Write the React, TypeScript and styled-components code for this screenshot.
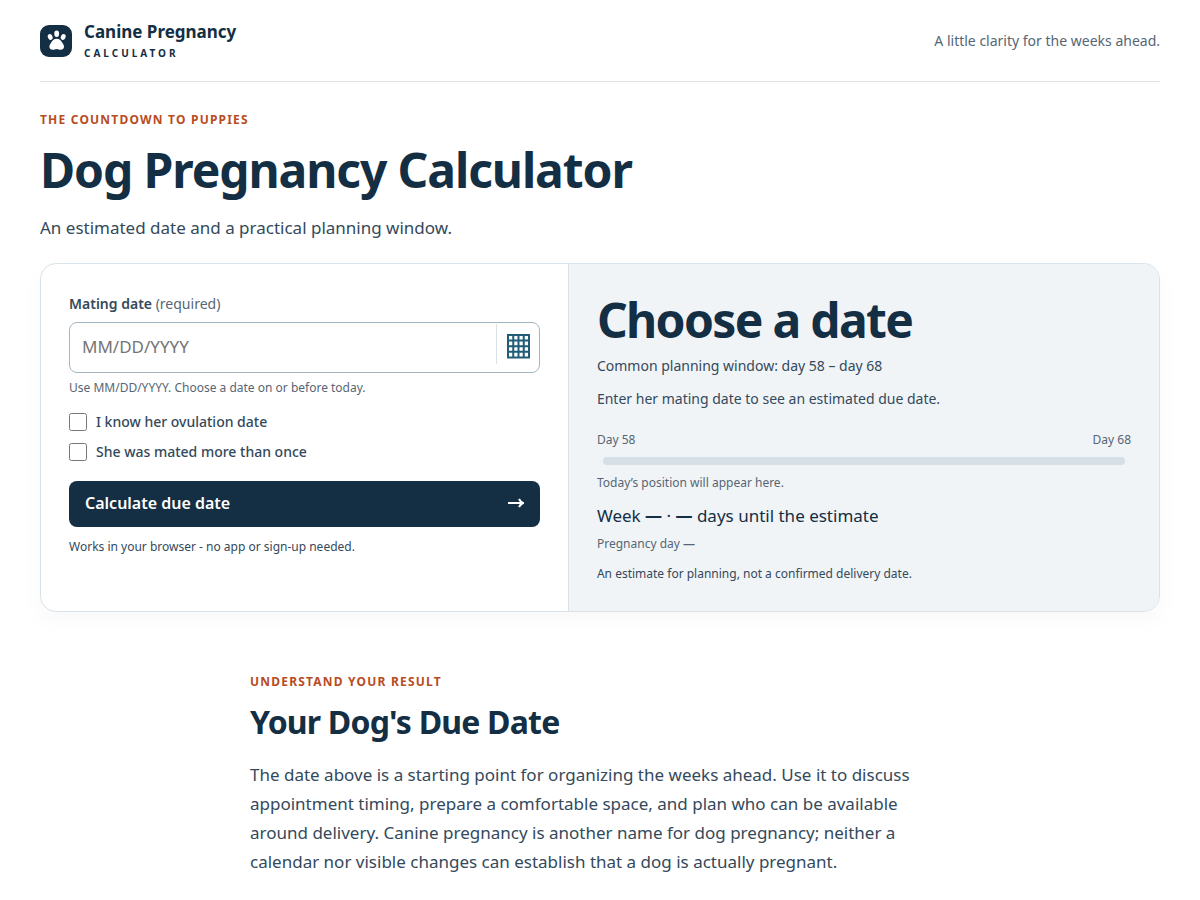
import React from "react";
import styled, { createGlobalStyle } from "styled-components";

const navy = "#142e43";
const slate = "#34495b";
const muted = "#566675";
const line = "#d9e2e8";

const GlobalStyle = createGlobalStyle`
  *, *::before, *::after { box-sizing: border-box; }
  body {
    margin: 0;
    background: #fff;
    color: ${slate};
    font-family: "Noto Sans", sans-serif;
    font-size: 17px;
  }
  h1, h2, p { margin: 0; }
  button, input { font: inherit; }
`;

const Page = styled.div`
  max-width: 1200px;
  margin: 0 auto;
  padding: 0 40px;
`;

const Header = styled.header`
  display: flex;
  align-items: center;
  justify-content: space-between;
  min-height: 82px;
  border-bottom: 1px solid #dde3e7;
`;

const Brand = styled.a`
  display: flex;
  align-items: center;
  gap: 12px;
  color: ${navy};
  text-decoration: none;
`;

const BrandMark = styled.svg`
  width: 32px;
  height: 32px;
`;

const BrandText = styled.span`
  display: flex;
  flex-direction: column;
  padding-top: 2px;
`;

const BrandName = styled.span`
  font-size: 17px;
  font-weight: 700;
  line-height: 22px;
`;

const BrandSub = styled.span`
  font-size: 10px;
  font-weight: 700;
  line-height: 20px;
  letter-spacing: 3px;
`;

const Tagline = styled.p`
  color: ${muted};
  font-size: 14px;
  line-height: 22px;
`;

const Intro = styled.section`
  padding: 29px 0 21px;
`;

const Eyebrow = styled.p`
  color: #b84c1f;
  font-size: 12px;
  font-weight: 700;
  line-height: 18px;
  letter-spacing: 0.1em;
  text-transform: uppercase;
`;

const Title = styled.h1`
  margin: 13px 0 16px;
  color: ${navy};
  font-size: 48px;
  font-weight: 700;
  line-height: 56px;
  letter-spacing: -0.023em;
`;

const Lead = styled.p`
  line-height: 28px;
`;

const Card = styled.section`
  display: grid;
  grid-template-columns: 17fr 19fr;
  overflow: hidden;
  border: 1px solid ${line};
  border-radius: 16px;
  box-shadow: 0 8px 24px rgba(20, 45, 66, 0.03);
`;

const DateForm = styled.form`
  padding: 28px;
  border-right: 1px solid ${line};
`;

const FieldLabel = styled.label`
  display: block;
  margin-bottom: 6px;
  font-size: 14px;
  font-weight: 600;
  line-height: 24px;
`;

const Optional = styled.span`
  color: ${muted};
  font-weight: 400;
`;

const DateField = styled.div`
  display: flex;
  height: 51px;
  border: 1px solid #a3b7c2;
  border-radius: 8px;
  background: #fff;
`;

const DateInput = styled.input`
  flex: 1;
  min-width: 0;
  padding: 0 12px 2px;
  border: 0;
  border-radius: 8px;
  background: transparent;
  color: ${navy};
  outline-offset: -2px;
  &::placeholder { color: #757575; }
`;

const PickerButton = styled.button`
  display: grid;
  place-items: center;
  width: 43px;
  height: 40px;
  margin: 1px 0;
  padding: 4px 0 0;
  border: 0;
  border-left: 1px solid ${line};
  background: transparent;
  color: #215c78;
  cursor: pointer;
`;

const Small = styled.p<{ $soft?: boolean }>`
  color: ${(p) => (p.$soft ? muted : slate)};
  font-size: 12px;
  line-height: 18px;
`;

const Help = styled(Small)`
  margin-top: 6px;
`;

const Checks = styled.div`
  display: grid;
  gap: 8px;
  margin: 14px 0 18px;
`;

const CheckLabel = styled.label`
  display: flex;
  align-items: center;
  gap: 9px;
  font-size: 14px;
  font-weight: 500;
  line-height: 22px;
`;

const CheckBox = styled.input`
  width: 18px;
  height: 18px;
  margin: 0;
`;

const Submit = styled.button`
  display: flex;
  align-items: center;
  justify-content: space-between;
  width: 100%;
  height: 46px;
  padding: 0 16px 2px;
  border: 0;
  border-radius: 8px;
  background: ${navy};
  color: #fff;
  font-size: 16px;
  font-weight: 600;
  cursor: pointer;
`;

const FormNote = styled(Small)`
  margin-top: 11px;
`;

const Result = styled.div`
  padding: 28px;
  background: #f0f4f7;
`;

const ResultDate = styled.p`
  margin-bottom: 7px;
  color: ${navy};
  font-size: 48px;
  font-weight: 700;
  line-height: 56px;
  letter-spacing: -0.035em;
`;

const ResultText = styled.p`
  margin-bottom: 11px;
  font-size: 14px;
  line-height: 22px;
`;

const Scale = styled.div`
  margin-top: 21px;
`;

const ScaleEnds = styled.div`
  display: flex;
  justify-content: space-between;
  color: ${muted};
  font-size: 12px;
  line-height: 18px;
`;

const Track = styled.div`
  height: 8px;
  margin: 8px 6px 9px;
  border-radius: 4px;
  background: #d6dfe5;
`;

const Countdown = styled.p`
  margin: 11px 0 6px;
  color: ${navy};
  line-height: 26px;
`;

const Disclaimer = styled(Small)`
  margin-top: 12px;
`;

const Article = styled.article`
  max-width: 700px;
  margin: 0 auto;
  padding: 61px 0 28px;
`;

const ArticleTitle = styled.h2`
  margin: 10px 0 17px;
  color: ${navy};
  font-size: 32px;
  font-weight: 700;
  line-height: 42px;
  letter-spacing: -0.025em;
`;

const Body = styled.p`
  line-height: 29px;
`;

function Paw() {
  return (
    <BrandMark viewBox="0 0 32 32" aria-hidden="true">
      <rect width="32" height="32" rx="9" fill={navy} />
      <g fill="#fff">
        <ellipse cx="10.200" cy="12" rx="2.300" ry="3" transform="rotate(-24 10.200 12)" />
        <ellipse cx="16.700" cy="8.700" rx="2.400" ry="3.200" />
        <ellipse cx="23.200" cy="12" rx="2.300" ry="3" transform="rotate(24 23.200 12)" />
        <path d="M16.700 13.800c-3 0-4.400 2-5.600 4-1 1.600-1.700 2.500-1.700 3.900 0 1.900 1.500 3 3.200 3 1.500 0 2.600-.8 4.100-.8s2.600.8 4.100.8c1.700 0 3.200-1.100 3.200-3 0-1.400-.7-2.300-1.700-3.900-1.200-2-2.600-4-5.600-4z" />
      </g>
    </BrandMark>
  );
}

function Arrow() {
  return (
    <svg width="16" height="12" viewBox="0 0 16 12" fill="none" stroke="currentColor" strokeWidth="2" aria-hidden="true">
      <path d="M0 6h15M11 2q1.400 2.800 4 4q-2.600 1.200-4 4" />
    </svg>
  );
}

function CalendarGrid() {
  return (
    <svg width="24" height="26" viewBox="0 0 24 26" fill="none" stroke="currentColor" aria-hidden="true">
      <path strokeWidth="2" d="M2 2h21v22.500H2z" />
      <path strokeWidth="2" d="M7.250 2v22M12.500 2v22M17.750 2v22M2 7.600h21M2 13.200h21M2 18.800h21" />
    </svg>
  );
}

export default function App() {
  return (
    <>
      <GlobalStyle />
      <Page>
        <Header>
          <Brand href="#">
            <Paw />
            <BrandText>
              <BrandName>Canine Pregnancy</BrandName>
              <BrandSub>CALCULATOR</BrandSub>
            </BrandText>
          </Brand>
          <Tagline>A little clarity for the weeks ahead.</Tagline>
        </Header>
        <main>
          <Intro>
            <Eyebrow>The countdown to puppies</Eyebrow>
            <Title>Dog Pregnancy Calculator</Title>
            <Lead>An estimated date and a practical planning window.</Lead>
          </Intro>
          <Card>
            <DateForm onSubmit={(e) => e.preventDefault()}>
              <FieldLabel htmlFor="mating-date">
                Mating date <Optional>(required)</Optional>
              </FieldLabel>
              <DateField>
                <DateInput id="mating-date" type="text" placeholder="MM/DD/YYYY" aria-describedby="date-help" />
                <PickerButton type="button" aria-label="Open calendar">
                  <CalendarGrid />
                </PickerButton>
              </DateField>
              <Help id="date-help" $soft>
                Use MM/DD/YYYY. Choose a date on or before today.
              </Help>
              <Checks>
                <CheckLabel>
                  <CheckBox type="checkbox" />
                  I know her ovulation date
                </CheckLabel>
                <CheckLabel>
                  <CheckBox type="checkbox" />
                  She was mated more than once
                </CheckLabel>
              </Checks>
              <Submit type="submit">
                Calculate due date
                <Arrow />
              </Submit>
              <FormNote>Works in your browser - no app or sign-up needed.</FormNote>
            </DateForm>
            <Result>
              <ResultDate>Choose a date</ResultDate>
              <ResultText>Common planning window: day 58 – day 68</ResultText>
              <ResultText>Enter her mating date to see an estimated due date.</ResultText>
              <Scale>
                <ScaleEnds>
                  <span>Day 58</span>
                  <span>Day 68</span>
                </ScaleEnds>
                <Track />
                <Small $soft>Today’s position will appear here.</Small>
              </Scale>
              <Countdown>
                Week <strong>—</strong> · <strong>—</strong> days until the estimate
              </Countdown>
              <Small $soft>
                Pregnancy day <strong>—</strong>
              </Small>
              <Disclaimer>An estimate for planning, not a confirmed delivery date.</Disclaimer>
            </Result>
          </Card>
          <Article>
            <Eyebrow>Understand your result</Eyebrow>
            <ArticleTitle>Your Dog's Due Date</ArticleTitle>
            <Body>
              The date above is a starting point for organizing the weeks ahead. Use it to discuss appointment timing,
              prepare a comfortable space, and plan who can be available around delivery. Canine pregnancy is another
              name for dog pregnancy; neither a calendar nor visible changes can establish that a dog is actually
              pregnant.
            </Body>
          </Article>
        </main>
      </Page>
    </>
  );
}
